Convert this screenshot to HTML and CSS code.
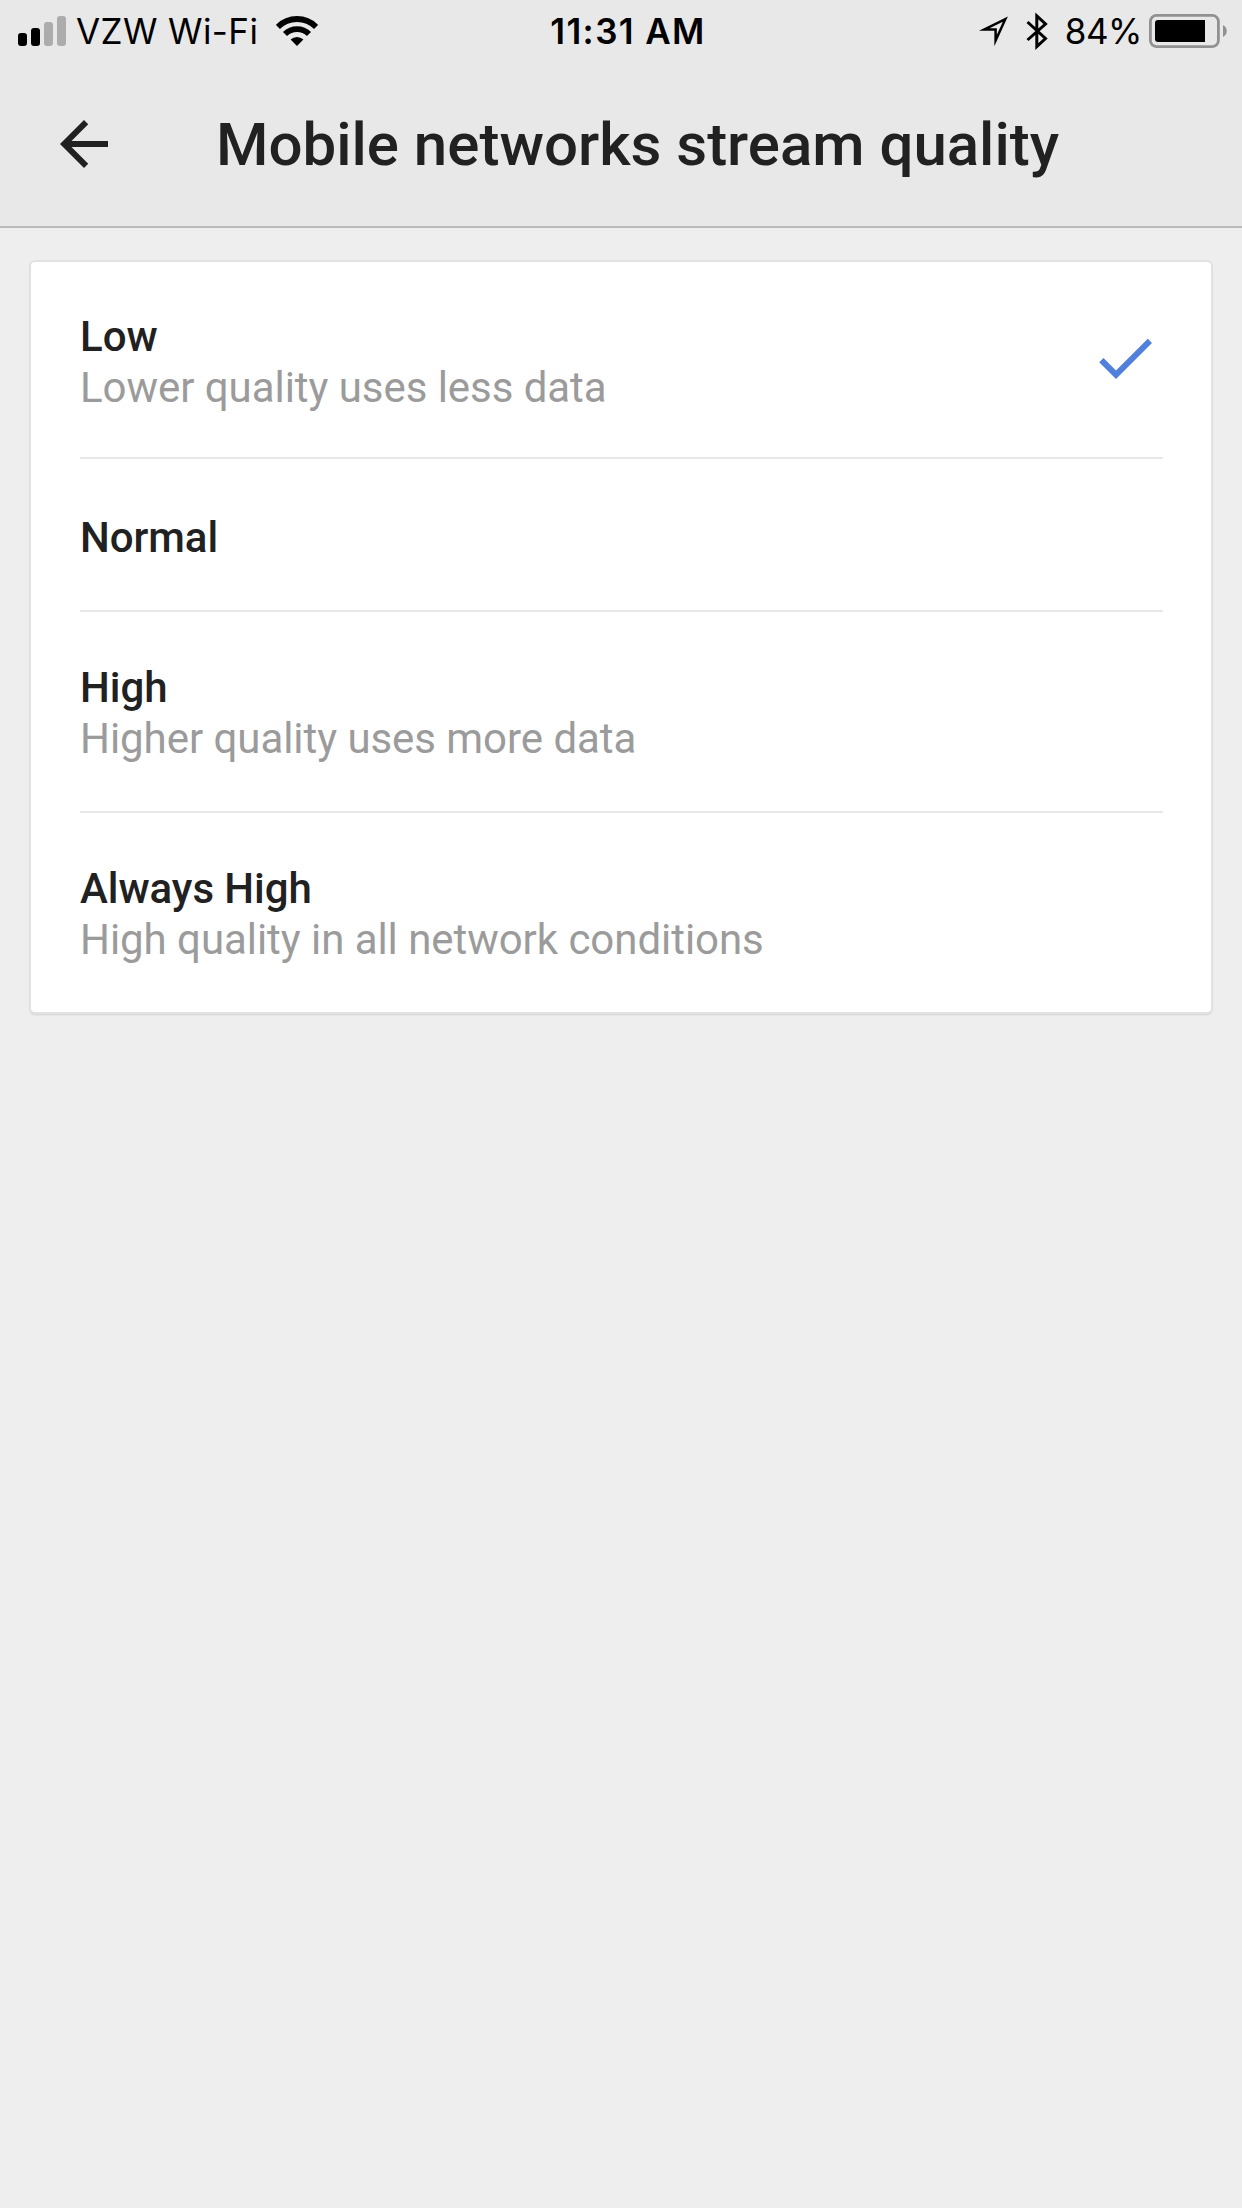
FILE: index.html
```html
<!DOCTYPE html>
<html lang="en">
<head>
    <meta charset="UTF-8">
    <meta name="viewport" content="width=device-width, initial-scale=1.0">
    <title>Mobile networks stream quality</title>
    <link rel="stylesheet" href="styles.css">
</head>
<body>
    <header class="header">
        <div class="status-bar">
            <div class="status-left">
                <svg class="signal" width="48" height="30" viewBox="0 0 48 30">
                    <rect x="0" y="17" width="9" height="13" rx="3"/>
                    <rect x="13" y="12" width="9" height="18" rx="3"/>
                    <rect x="26" y="6" width="9" height="24" rx="3" fill="#acacac"/>
                    <rect x="39" y="0" width="9" height="30" rx="3" fill="#acacac"/>
                </svg>
                <span class="carrier">VZW Wi-Fi</span>
                <svg class="wifi" width="42" height="30" viewBox="0 0 42 30">
                    <path d="M1.9 10.9a27 27 0 0 1 38.2 0M9 18a17 17 0 0 1 24 0" fill="none" stroke="#000" stroke-width="5.8"/>
                    <path d="M21 30l-6.4-6.4a9.3 9.3 0 0 1 12.8 0z"/>
                </svg>
            </div>
            <div class="clock">11:31 AM</div>
            <div class="status-right">
                <svg class="location" width="30" height="30" viewBox="0 0 30 30">
                    <path d="M5 13.6L26.300 3.200 16.600 24.500V13.600z" fill="none" stroke="#000" stroke-width="2.5" stroke-miterlimit="10"/>
                </svg>
                <svg class="bluetooth" width="22" height="38" viewBox="0 0 22 38">
                    <path d="M1.500 10l18 16.500-8.700 8V4l8.700 8-18 16" fill="none" stroke="#000" stroke-width="3" stroke-miterlimit="10"/>
                </svg>
                <span class="percent">84%</span>
                <svg class="battery" width="78" height="34" viewBox="0 0 78 34">
                    <rect x="1.4" y="1.4" width="68" height="31.2" rx="6" fill="none" stroke="#919191" stroke-width="2.8"/>
                    <path d="M56 6v22H9a3 3 0 0 1-3-3V9a3 3 0 0 1 3-3z"/>
                    <path d="M74 11c5 2.500 5 9.500 0 12z" fill="#919191"/>
                </svg>
            </div>
        </div>
        <div class="title-bar">
            <svg class="back" width="72" height="72" viewBox="0 0 24 24">
                <path d="M20 11H7.830l5.590-5.590L12 4l-8 8 8 8 1.410-1.410L7.830 13H20z"/>
            </svg>
            <h1>Mobile networks stream quality</h1>
        </div>
    </header>

    <ul class="card">
        <li class="option">
            <div>
                <div class="name">Low</div>
                <div class="desc">Lower quality uses less data</div>
            </div>
            <svg class="check" width="72" height="72" viewBox="0 0 24 24">
                <path d="M9 16.170L4.830 12l-1.420 1.410L9 19 21 7l-1.410-1.410z"/>
            </svg>
        </li>
        <li class="option">
            <div class="name">Normal</div>
        </li>
        <li class="option">
            <div>
                <div class="name">High</div>
                <div class="desc">Higher quality uses more data</div>
            </div>
        </li>
        <li class="option">
            <div>
                <div class="name">Always High</div>
                <div class="desc">High quality in all network conditions</div>
            </div>
        </li>
    </ul>
</body>
</html>
```

FILE: styles.css
```css
* {
    box-sizing: border-box;
}
body {
    margin: 0;
    min-height: 2208px;
    background: #eeeeee;
    font-family: Roboto, sans-serif;
    color: #212121;
}
svg {
    display: block;
    flex: none;
}
.header {
    height: 228px;
    background: #e8e8e8;
    border-bottom: 2px solid #bababa;
}
.status-bar {
    display: grid;
    grid-template-columns: 1fr auto 1fr;
    align-items: center;
    height: 60px;
    padding: 0 15px 0 18px;
    font-family: Inter, sans-serif;
    font-size: 35px;
    line-height: 60px;
    color: #000;
    white-space: nowrap;
}
.status-left, .status-right {
    display: flex;
    align-items: center;
}
.status-right {
    justify-content: flex-end;
}
.carrier {
    margin: 1px 18px 0 10px;
    letter-spacing: 0.4px;
}
.clock {
    padding: 1px 0 0 11px;
    font-weight: 600;
    letter-spacing: 1.4px;
}
.bluetooth {
    margin-left: 17px;
}
.percent {
    margin: 1px 7px 0 17px;
    letter-spacing: -0.5px;
}
.title-bar {
    display: flex;
    align-items: center;
    height: 168px;
    padding-left: 48px;
}
.back {
    fill: #212121;
}
h1 {
    margin: 1px 0 0 96px;
    font-size: 60px;
    font-weight: 500;
    line-height: 72px;
    white-space: nowrap;
}
.card {
    margin: 34px 31px 0;
    padding: 0 48px 0 49px;
    list-style: none;
    background: #fff;
    border-radius: 4px;
    box-shadow: 0 0 0 2px #e2e2e2, 0 2px 3px rgba(0,0,0,0.25);
}
.option {
    display: flex;
    justify-content: space-between;
    padding: 49px 0;
    height: 201px;
    font-size: 42px;
    line-height: 51px;
    letter-spacing: -0.05px;
    border-bottom: 2px solid #e8e8e8;
}
.option:first-child {
    height: 197px;
}
.option:nth-child(2) {
    height: 153px;
    padding-top: 53px;
}
.option:nth-child(3) {
    padding-top: 50px;
}
.option:last-child {
    height: 199px;
    padding-top: 50px;
    border-bottom: none;
}
.name {
    font-weight: 500;
}
.desc {
    color: #9b9b9b;
}
.check {
    margin: 11px 2px 0 0;
    fill: #5080dc;
}
```
